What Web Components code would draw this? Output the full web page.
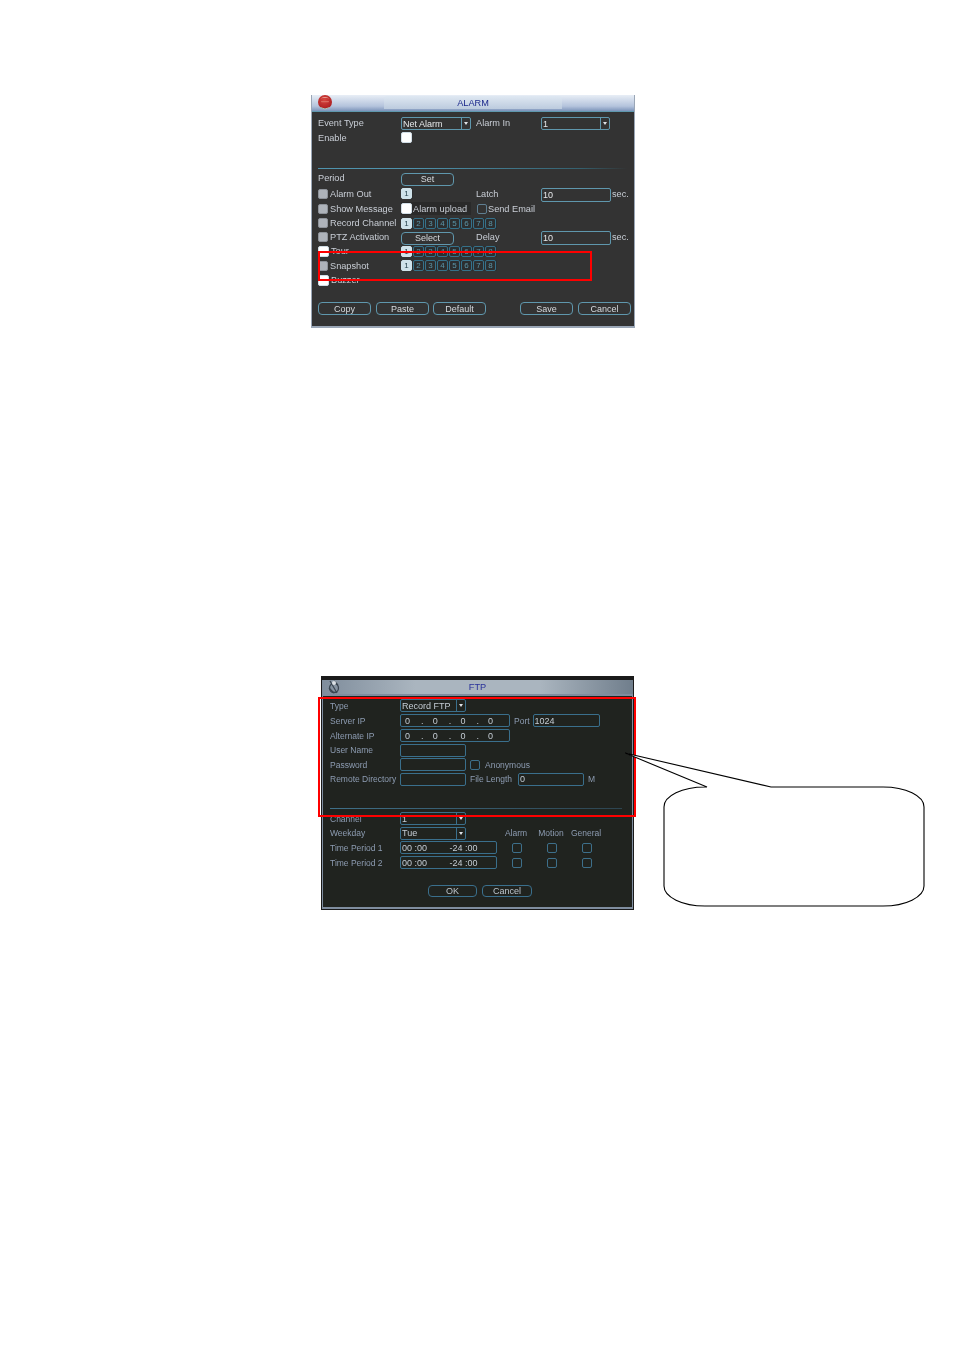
<!DOCTYPE html>
<html>
<head>
<meta charset="utf-8">
<title>Manual page</title>
<style>
  html, body { margin: 0; background: #fff; }
</style>
</head>
<body>
<manual-page></manual-page>

<script>
// small dvr widgets
class DvrWindow extends HTMLElement {
    constructor() {
        super();
        this.attachShadow({ mode: 'open' });
        this.shadowRoot.innerHTML = `
            <style>
                :host { display: block; box-sizing: border-box; font: var(--ui-size, 9.2px) "Liberation Sans", Arial, sans-serif; filter: blur(.35px); }
                .title { position: relative; box-sizing: border-box; display: flex; align-items: center; justify-content: center; height: var(--title-h, 16px); padding-bottom: var(--title-pad, 0); background: var(--title-bg); color: var(--title-color, #1d2a8c); font-size: 9.2px; }
                .tab { position: absolute; top: 1px; bottom: 2px; left: var(--tab-l, 72px); right: var(--tab-r, 72px); background: var(--tab-bg, none); border-radius: 3px 3px 0 0; }
                .text { position: relative; }
                .icon { position: absolute; left: var(--icon-l, 6px); top: var(--icon-t, 0); line-height: 0; }
                .body { background: var(--body-bg, #333); color: var(--text, #c9ced6); }
            </style>
            <div class="title">
                <div class="tab"></div>
                <div class="icon"><slot name="icon"></slot></div>
                <span class="text"></span>
            </div>
            <div class="body"><slot></slot></div>
        `;
    }
    connectedCallback() {
        this.shadowRoot.querySelector('.text').textContent = this.getAttribute('heading');
    }
}
customElements.define('dvr-window', DvrWindow);

class DvrRow extends HTMLElement {
    constructor() {
        super();
        this.attachShadow({ mode: 'open' });
        this.shadowRoot.innerHTML = `
            <style>
                :host { display: flex; align-items: center; height: 15px; white-space: nowrap; }
            </style>
            <slot></slot>
        `;
    }
}
customElements.define('dvr-row', DvrRow);

class DvrField extends HTMLElement {
    constructor() {
        super();
        this.attachShadow({ mode: 'open' });
        this.shadowRoot.innerHTML = `
            <style>
                :host { display: flex; align-items: center; box-sizing: border-box; height: var(--field-h, 14px); padding-left: 1px; border: 1px solid var(--line, #5f97ad); border-radius: 2px; flex: none; color: var(--field-text, #e6e8ea); background: var(--field-bg, transparent); overflow: hidden; font-size: 9px; }
                .in { display: flex; white-space: pre; }
            </style>
            <div class="in"><slot></slot></div>
        `;
    }
}
customElements.define('dvr-field', DvrField);

class DvrSelect extends HTMLElement {
    constructor() {
        super();
        this.attachShadow({ mode: 'open' });
        this.shadowRoot.innerHTML = `
            <style>
                :host { display: flex; align-items: center; box-sizing: border-box; height: 13px; border: 1px solid var(--line, #5f97ad); border-radius: 2px; flex: none; color: var(--field-text, #e6e8ea); font-size: 9px; }
                .val { flex: 1; padding-left: 1px; overflow: hidden; }
                .arrow { flex: none; width: 8px; height: 100%; border-left: 1px solid var(--line, #5f97ad); display: flex; align-items: center; justify-content: center; }
                .arrow i { border: 2.5px solid transparent; border-top: 3px solid #dfe3e8; border-bottom: 0; }
            </style>
            <div class="val"><slot></slot></div>
            <div class="arrow"><i></i></div>
        `;
    }
}
customElements.define('dvr-select', DvrSelect);

class DvrButton extends HTMLElement {
    constructor() {
        super();
        this.attachShadow({ mode: 'open' });
        this.shadowRoot.innerHTML = `
            <style>
                :host { display: flex; align-items: center; justify-content: center; box-sizing: border-box; width: 53px; height: 13px; border: 1px solid var(--line, #5f97ad); border-radius: 4px; flex: none; color: var(--btn-text, #d6dade); font-size: 9px; }
            </style>
            <slot></slot>
        `;
    }
}
customElements.define('dvr-button', DvrButton);

class DvrCheck extends HTMLElement {
    constructor() {
        super();
        this.attachShadow({ mode: 'open' });
        this.shadowRoot.innerHTML = `
            <style>
                :host { display: block; box-sizing: border-box; width: 10px; height: 10px; flex: none; border-radius: 2px; border: 1px solid #5f7f92; }
                :host([kind="grey"]) { background: #aeb3ba; border-color: #8d9299; }
                :host([kind="white"]) { background: #fff; border-color: #d0dde6; width: 11px; height: 11px; }
                :host([kind="dim"]) { border-color: #3d6f8a; }
            </style>
        `;
    }
}
customElements.define('dvr-check', DvrCheck);

class DvrChannels extends HTMLElement {
    constructor() {
        super();
        this.attachShadow({ mode: 'open' });
        this.shadowRoot.innerHTML = `
            <style>
                :host { display: flex; gap: 1px; flex: none; background: #2c2e2f; padding-right: 1px; }
                b { box-sizing: border-box; width: 11px; height: 11px; border: 1px solid #35718a; border-radius: 2px; font: 8px/9px "Liberation Sans", Arial, sans-serif; text-align: center; color: #5a95a8; }
                b.on { background: #cfe2ea; color: #27434f; border-color: #cfe2ea; }
            </style>
        `;
    }
    connectedCallback() {
        const count = Number(this.getAttribute('count') || 8);
        for (let i = 1; i <= count; i++) {
            const box = document.createElement('b');
            box.textContent = i;
            if (i === 1) box.classList.add('on');
            this.shadowRoot.appendChild(box);
        }
    }
}
customElements.define('dvr-channels', DvrChannels);

class AlarmDialog extends HTMLElement {
    constructor() {
        super();
        this.attachShadow({ mode: 'open' });
        this.shadowRoot.innerHTML = `
            <style>
                :host { display: block; position: relative; width: 324px; }
                dvr-window {
                    border: 1px solid #9aa6b6; border-top: 0; border-bottom-width: 2px;
                    --title-h: 16px;
                    --title-pad: 1px;
                    --title-bg: linear-gradient(#e8eef6, #b4c3dc 70%, #7d94ba);
                    --tab-bg: linear-gradient(#dfe8f2, #bccbde);
                    --tab-l: 72px; --tab-r: 72px;
                    --icon-l: 6px; --icon-t: 0px;
                    --body-bg: #333333;
                }
                .content { padding: 3px 3px 10px 6px; border-top: 1px solid #5f97ad; }
                .c1 { width: 83px; flex: none; display: flex; align-items: center; gap: 2px; }
                .c2 { width: 75px; flex: none; display: flex; align-items: center; }
                .c3 { width: 65px; flex: none; }
                .line { height: 1px; margin: 23px 4px 1px 0; background: linear-gradient(90deg, #4f93ad 30%, #35606e 85%, #333); }
                .sec { margin-left: 1px; }
                .up { width: 70px; height: 13px; background: #2a2a2a; display: flex; align-items: center; gap: 1px; flex: none; }
                .mail { display: flex; align-items: center; gap: 1px; margin-left: 6px; }
                .spacer { height: 14px; }
                .btns { gap: 5px; }
                .btns .gap { width: 24px; flex: none; }
                .btns .tight { margin-left: -1px; }
                .h14 { height: 14px; }
                .h16 { height: 16px; }
                /* controls sit a pixel below their labels */
                dvr-select, dvr-field, .c2 dvr-button { margin-top: 2px; }
                .red { position: absolute; left: 7px; top: 156px; width: 274px; height: 30px; box-sizing: border-box; border: 2px solid #f00; }
            </style>
            <dvr-window heading="ALARM">
                <svg slot="icon" width="15" height="15" viewBox="0 0 15 15">
                    <defs>
                        <radialGradient id="ball" cx=".45" cy=".35" r=".7">
                            <stop offset="0" stop-color="#d8463f"/>
                            <stop offset="1" stop-color="#a81a1e"/>
                        </radialGradient>
                    </defs>
                    <circle cx="7" cy="7" r="7" fill="url(#ball)"/>
                    <path d="M2.5 3.4Q7 .4 11.5 3.4Q7 2.2 2.5 3.4Z" fill="#f3c0b6"/>
                    <rect x="3" y="6" width="8" height="1.2" rx=".6" fill="#d96a60"/>
                    <path d="M2.5 12.6Q7 15.4 11.5 12.6" stroke="#a9c8bc" fill="none"/>
                </svg>
                <div class="content">
                    <dvr-row>
                        <div class="c1">Event Type</div>
                        <div class="c2"><dvr-select style="width:70px">Net Alarm</dvr-select></div>
                        <div class="c3">Alarm In</div>
                        <dvr-select style="width:69px">1</dvr-select>
                    </dvr-row>
                    <dvr-row>
                        <div class="c1">Enable</div>
                        <div class="c2"><dvr-check kind="white"></dvr-check></div>
                    </dvr-row>
                    <div class="line"></div>
                    <dvr-row class="h16">
                        <div class="c1">Period</div>
                        <div class="c2"><dvr-button>Set</dvr-button></div>
                    </dvr-row>
                    <dvr-row>
                        <div class="c1"><dvr-check kind="grey"></dvr-check>Alarm Out</div>
                        <div class="c2"><dvr-channels count="1"></dvr-channels></div>
                        <div class="c3">Latch</div>
                        <dvr-field style="width:70px">10</dvr-field><span class="sec">sec.</span>
                    </dvr-row>
                    <dvr-row>
                        <div class="c1"><dvr-check kind="grey"></dvr-check>Show Message</div>
                        <div class="up"><dvr-check kind="white"></dvr-check>Alarm upload</div>
                        <div class="mail"><dvr-check></dvr-check>Send Email</div>
                    </dvr-row>
                    <dvr-row class="h14">
                        <div class="c1"><dvr-check kind="grey"></dvr-check>Record Channel</div>
                        <dvr-channels></dvr-channels>
                    </dvr-row>
                    <dvr-row class="h14">
                        <div class="c1"><dvr-check kind="grey"></dvr-check>PTZ Activation</div>
                        <div class="c2"><dvr-button>Select</dvr-button></div>
                        <div class="c3">Delay</div>
                        <dvr-field style="width:70px">10</dvr-field><span class="sec">sec.</span>
                    </dvr-row>
                    <dvr-row class="h14">
                        <div class="c1"><dvr-check kind="white"></dvr-check>Tour</div>
                        <dvr-channels></dvr-channels>
                    </dvr-row>
                    <dvr-row>
                        <div class="c1"><dvr-check kind="grey"></dvr-check>Snapshot</div>
                        <dvr-channels></dvr-channels>
                    </dvr-row>
                    <dvr-row class="h14">
                        <div class="c1"><dvr-check kind="white"></dvr-check>Buzzer</div>
                    </dvr-row>
                    <div class="spacer"></div>
                    <dvr-row class="btns">
                        <dvr-button>Copy</dvr-button>
                        <dvr-button>Paste</dvr-button>
                        <dvr-button class="tight">Default</dvr-button>
                        <div class="gap"></div>
                        <dvr-button>Save</dvr-button>
                        <dvr-button>Cancel</dvr-button>
                    </dvr-row>
                </div>
            </dvr-window>
            <div class="red"></div>
        `;
    }
}
customElements.define('alarm-dialog', AlarmDialog);

class FtpDialog extends HTMLElement {
    constructor() {
        super();
        this.attachShadow({ mode: 'open' });
        this.shadowRoot.innerHTML = `
            <style>
                :host { display: block; position: relative; width: 313px; }
                dvr-window {
                    border: 1px solid #1a1a1a; border-top-width: 4px; border-bottom-width: 1px;
                    background: #1a1a1a;
                    --ui-size: 8.5px;
                    --title-h: 14px;
                    --title-bg: linear-gradient(90deg, #7f8d9c, #aab5bf 30%, #aab5bf 70%, #707e8c);
                    --title-color: #27309a;
                    --icon-l: 5px; --icon-t: 0;
                    --body-bg: #20231f;
                    --text: #8d9cb2;
                    --line: #3a6f8c;
                    --field-text: #c4ccd4;
                    --field-h: 13px;
                    --btn-text: #bcc4cc;
                }
                .content { padding: 2px 4px 9px 7px; border: 1px solid #7f8d9f; border-top-width: 2px; border-bottom-width: 2px; }
                .c1 { width: 70px; flex: none; }
                .ip { width: 110px; padding-left: 4px; }
                .ip .n { width: 16px; }
                .ip .d { width: 11.7px; }
                .mid { display: flex; align-items: center; gap: 4px; margin-left: 4px; }
                .mid .snug { margin-left: -1px; }
                .mid .wide { margin-left: 2px; }
                .line { height: 1px; margin: 22px 6px 2px 0; background: linear-gradient(90deg, #3f6f88, #2d4450); }
                .heads { margin-left: 32.5px; display: flex; }
                .heads span, .marks span { width: 35px; text-align: center; flex: none; }
                .marks { margin-left: 2px; display: flex; }
                .marks span { display: flex; justify-content: center; }
                .spacer { height: 13px; }
                .btns { padding-left: 98px; gap: 5px; }
                .btns dvr-button { width: 49px; height: 12px; }
                .btns .next { width: 50px; }
                .h14 { height: 14px; }
                .red { position: absolute; left: -3px; top: 21px; width: 318px; height: 120px; box-sizing: border-box; border: 2px solid #f00; }
            </style>
            <dvr-window heading="FTP">
                <svg slot="icon" width="14" height="14" viewBox="0 0 14 14" fill="none" stroke="#3a4652">
                    <circle cx="7" cy="8" r="4.5" stroke-width="1.3"/>
                    <path d="M3 1l7 12M7 1l4 4M2 8l5 5" stroke-width="1.2"/>
                    <circle cx="7" cy="3" r="2" fill="#dbe1e6" stroke="none"/>
                </svg>
                <div class="content">
                    <dvr-row>
                        <div class="c1">Type</div>
                        <dvr-select style="width:66px">Record FTP</dvr-select>
                    </dvr-row>
                    <dvr-row>
                        <div class="c1">Server IP</div>
                        <dvr-field class="ip"><span class="n">0</span><span class="d">.</span><span class="n">0</span><span class="d">.</span><span class="n">0</span><span class="d">.</span><span class="n">0</span></dvr-field>
                        <div class="mid">Port<dvr-field class="snug" style="width:67px">1024</dvr-field></div>
                    </dvr-row>
                    <dvr-row>
                        <div class="c1">Alternate IP</div>
                        <dvr-field class="ip"><span class="n">0</span><span class="d">.</span><span class="n">0</span><span class="d">.</span><span class="n">0</span><span class="d">.</span><span class="n">0</span></dvr-field>
                    </dvr-row>
                    <dvr-row class="h14">
                        <div class="c1">User Name</div>
                        <dvr-field style="width:66px"></dvr-field>
                    </dvr-row>
                    <dvr-row>
                        <div class="c1">Password</div>
                        <dvr-field style="width:66px"></dvr-field>
                        <div class="mid" style="gap:5px"><dvr-check kind="dim"></dvr-check>Anonymous</div>
                    </dvr-row>
                    <dvr-row class="h14">
                        <div class="c1">Remote Directory</div>
                        <dvr-field style="width:66px"></dvr-field>
                        <div class="mid">File Length<dvr-field class="wide" style="width:66px">0</dvr-field>M</div>
                    </dvr-row>
                    <div class="line"></div>
                    <dvr-row>
                        <div class="c1">Channel</div>
                        <dvr-select style="width:66px">1</dvr-select>
                    </dvr-row>
                    <dvr-row class="h14">
                        <div class="c1">Weekday</div>
                        <dvr-select style="width:66px">Tue</dvr-select>
                        <div class="heads"><span>Alarm</span><span>Motion</span><span>General</span></div>
                    </dvr-row>
                    <dvr-row>
                        <div class="c1">Time Period 1</div>
                        <dvr-field style="width:97px">00 :00         -24 :00</dvr-field>
                        <div class="marks"><span><dvr-check kind="dim"></dvr-check></span><span><dvr-check kind="dim"></dvr-check></span><span><dvr-check kind="dim"></dvr-check></span></div>
                    </dvr-row>
                    <dvr-row>
                        <div class="c1">Time Period 2</div>
                        <dvr-field style="width:97px">00 :00         -24 :00</dvr-field>
                        <div class="marks"><span><dvr-check kind="dim"></dvr-check></span><span><dvr-check kind="dim"></dvr-check></span><span><dvr-check kind="dim"></dvr-check></span></div>
                    </dvr-row>
                    <div class="spacer"></div>
                    <dvr-row class="btns">
                        <dvr-button>OK</dvr-button>
                        <dvr-button class="next">Cancel</dvr-button>
                    </dvr-row>
                </div>
            </dvr-window>
            <div class="red"></div>
        `;
    }
}
customElements.define('ftp-dialog', FtpDialog);

class CalloutShape extends HTMLElement {
    constructor() {
        super();
        this.attachShadow({ mode: 'open' });
        this.shadowRoot.innerHTML = `
            <style>
                :host { display: block; position: absolute; left: 304px; top: 72px; line-height: 0; }
            </style>
            <svg width="305" height="160" viewBox="0 0 305 160">
                <path d="M146 39H258A41 20 0 0 1 299 59V138A41 20 0 0 1 258 158H80A41 20 0 0 1 39 138V59A41 20 0 0 1 80 39H82L0 5Z" fill="#fff" stroke="#000" stroke-width="1.1"/>
            </svg>
        `;
    }
}
customElements.define('callout-shape', CalloutShape);

class ManualPage extends HTMLElement {
    constructor() {
        super();
        this.attachShadow({ mode: 'open' });
        this.shadowRoot.innerHTML = `
            <style>
                :host { display: flex; flex-direction: column; align-items: flex-start; box-sizing: border-box; width: 954px; height: 1350px; padding: 95px 0 0 311px; background: #fff; }
                .ftp-wrap { position: relative; margin: 348px 0 0 10px; }
            </style>
            <alarm-dialog></alarm-dialog>
            <div class="ftp-wrap">
                <ftp-dialog></ftp-dialog>
                <callout-shape></callout-shape>
            </div>
        `;
    }
}
customElements.define('manual-page', ManualPage);
</script>
</body>
</html>
